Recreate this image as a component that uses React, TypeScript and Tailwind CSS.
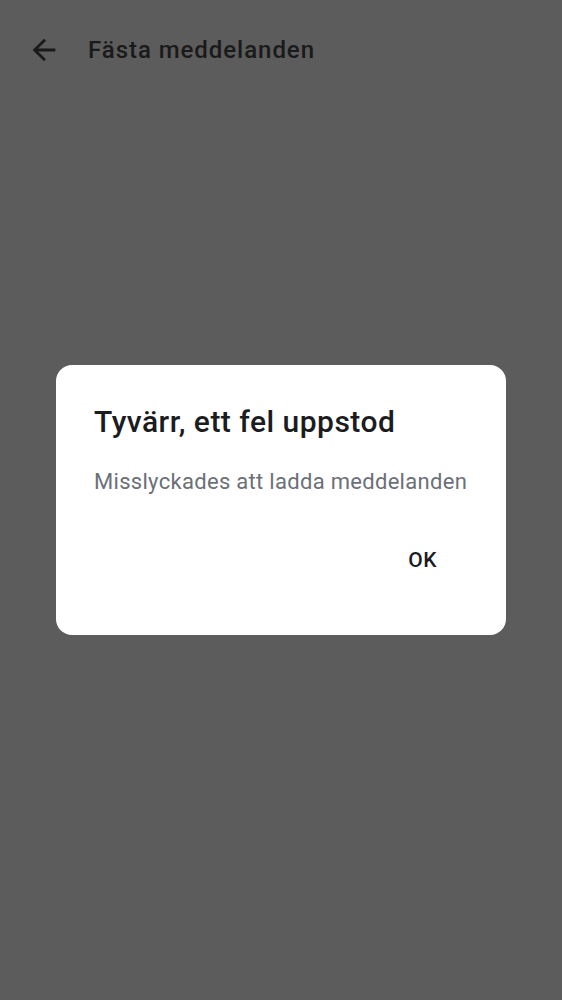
export default function App() {
  return (
    <div className="relative min-h-[1000px] bg-[#5c5c5c] font-['Roboto','Liberation_Sans',sans-serif]">
      {/* Header */}
      <div className="flex h-[100px] items-center pl-[27px]">
        <svg viewBox="0 0 24 24" className="h-[34px] w-[34px] fill-[#1a1a1a]">
          <path d="M20 11H7.83l5.59-5.59L12 4l-8 8 8 8 1.41-1.41L7.83 13H20v-2z" />
        </svg>
        <h1 className="ml-[27px] text-[24px] leading-[32px] font-medium tracking-[0.95px] text-[#1a1a1a]">Fästa meddelanden</h1>
      </div>

      {/* Dialog */}
      <div className="fixed inset-0 flex items-center justify-center">
        <div className="flex h-[270px] w-[450px] flex-col rounded-[16px] bg-white pt-[39px] pl-[38px]">
          <h2 className="text-[30px] leading-[36px] font-medium tracking-[0.48px] text-[#1b1c1f]">Tyvärr, ett fel uppstod</h2>
          <p className="mt-[28px] text-[22px] leading-[28px] tracking-[0.3px] text-[#6b7078]">Misslyckades att ladda meddelanden</p>
          <div className="mt-[52px] flex justify-end pr-[69px]">
            <button className="text-[21px] leading-[24px] font-medium tracking-[0.5px] text-[#1b1c1f]">OK</button>
          </div>
        </div>
      </div>
    </div>
  )
}
